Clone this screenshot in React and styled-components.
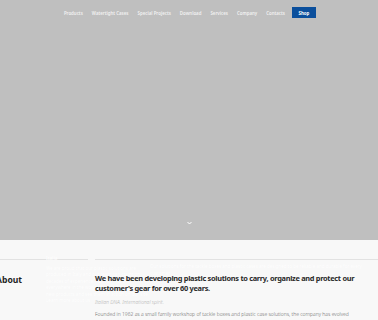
import styled, { createGlobalStyle } from "styled-components";

const GlobalStyle = createGlobalStyle`
  html, body {
    margin: 0;
    padding: 0;
    background: #f8f8f8;
    overflow: hidden;
  }
  body {
    font-family: "Noto Sans", "Open Sans", sans-serif;
  }
`;

const Page = styled.div`
  width: 378px;
  height: 320px;
  overflow: hidden;
  display: flex;
  flex-direction: column;
`;

const Hero = styled.div`
  height: 240px;
  background: #bfbfbf;
  display: flex;
  flex-direction: column;
  align-items: center;
  flex-shrink: 0;
`;

const Nav = styled.nav`
  display: flex;
  align-items: center;
  gap: 9px;
  padding: 7px 62px 0 0;
  align-self: stretch;
  justify-content: flex-end;
`;

const NavItem = styled.a`
  font-size: 4.4px;
  font-weight: 600;
  color: #f2f2f2;
  white-space: nowrap;
  text-decoration: none;
`;

const ShopButton = styled.a`
  display: flex;
  align-items: center;
  justify-content: center;
  flex-shrink: 0;
  width: 24px;
  height: 11px;
  background: #0b4f9c;
  color: #ffffff;
  font-size: 4.4px;
  font-weight: 700;
  margin-left: -2px;
  text-decoration: none;
`;

const HeroSpacer = styled.div`
  flex: 1;
`;

const Chevron = styled.div`
  display: flex;
  margin-bottom: 15px;
`;

const Content = styled.section`
  display: grid;
  grid-template-columns: 88px 1fr;
  column-gap: 7px;
  padding-top: 19px;
`;

const LeftCol = styled.div`
  border-top: 1px solid #e2e2e2;
  position: relative;
`;

const RightCol = styled.div`
  border-top: 1px solid #e2e2e2;
  padding-top: 14px;
  position: relative;
`;

const AboutTitle = styled.h2`
  margin: 14px 0 0 -4px;
  font-size: 8.6px;
  font-weight: 700;
  color: #1e1e1e;
`;

const Heading = styled.h3`
  margin: 0;
  font-size: 7.4px;
  line-height: 9.6px;
  font-weight: 700;
  letter-spacing: -0.3px;
  color: #2a2a2a;
  width: 272px;
`;

const Tagline = styled.p`
  margin: 6px 0 0;
  font-size: 5px;
  font-style: italic;
  font-weight: 300;
  color: #b2b2b2;
`;

const Body = styled.p`
  margin: 5px 0 0;
  font-size: 5px;
  line-height: 9px;
  font-weight: 300;
  color: #6a6a6a;
  width: 264px;
`;

const GhostMenu = styled.div`
  position: absolute;
  top: ${(p) => p.top}px;
  left: ${(p) => p.left}px;
  width: ${(p) => p.width}px;
  font-size: 4.5px;
  line-height: 6.5px;
  color: #ffffff;
  opacity: 0.9;
  pointer-events: none;
`;

const GhostLabel = styled.div`
  font-weight: 600;
  margin-bottom: 3px;
`;

const navItems = [
  "Products",
  "Watertight Cases",
  "Special Projects",
  "Download",
  "Services",
  "Company",
  "Contacts",
];

export default function App() {
  return (
    <>
      <GlobalStyle />
      <Page>
        <Hero>
          <Nav>
            {navItems.map((item) => (
              <NavItem key={item}>{item}</NavItem>
            ))}
            <ShopButton>Shop</ShopButton>
          </Nav>
          <HeroSpacer />
          <Chevron>
            <svg width="5" height="4" viewBox="0 0 10 8">
              <path d="M1 2 L5 6 L9 2" fill="none" stroke="#ffffff" strokeWidth="2" />
            </svg>
          </Chevron>
        </Hero>
        <Content>
          <LeftCol>
            <AboutTitle>About</AboutTitle>
            <GhostMenu top={-5} left={46} width={110}>
              <GhostLabel>Italia</GhostLabel>
              We are proud that our plastic solutions are produced in Italy and
              our team can count on decades of experience. You can find them
              everywhere in the world. Ask Mr. Plastic about the new products
              and see them in action on our site.
              <br />
              Learn more about us
            </GhostMenu>
          </LeftCol>
          <RightCol>
            <GhostMenu top={3} left={55} width={230}>
              Our solutions for the tackle boxes and plastic cases are designed
              to be reliable and durable for every customer.
            </GhostMenu>
            <Heading>
              We have been developing plastic solutions to carry, organize and
              protect our customer's gear for over 60 years.
            </Heading>
            <Tagline>Italian DNA. International spirit.</Tagline>
            <Body>
              Founded in 1962 as a small family workshop of tackle boxes and
              plastic case solutions, the company has evolved through the years
              into an international reference for professional cases.
            </Body>
          </RightCol>
        </Content>
      </Page>
    </>
  );
}
